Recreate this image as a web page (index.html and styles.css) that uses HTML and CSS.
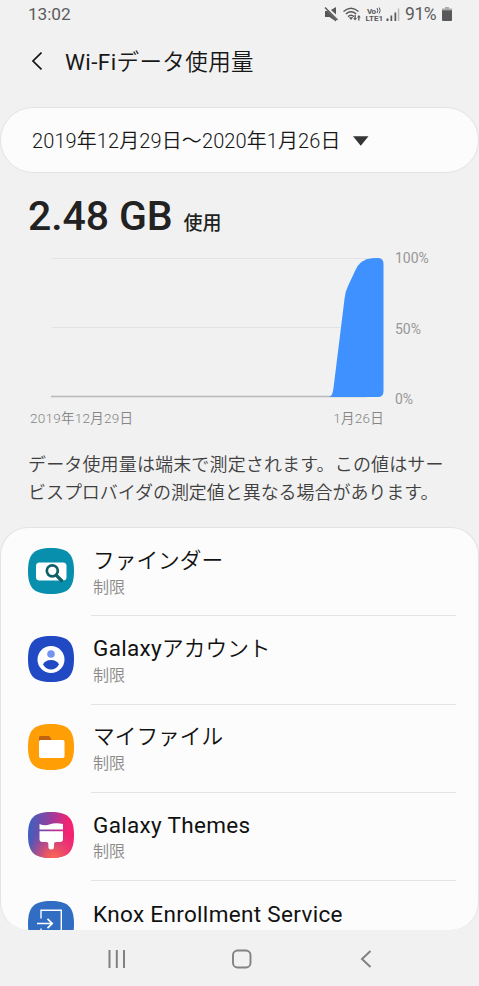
FILE: index.html
```html
<!DOCTYPE html>
<html lang="ja">
<head>
<meta charset="utf-8">
<title>Wi-Fiデータ使用量</title>
<link rel="stylesheet" href="styles.css">
</head>
<body>
<div class="screen">
  <div class="status">
    <span class="clock">13:02</span>
    <svg class="status-icons" width="78" height="20" viewBox="0 0 78 20">
      <path d="M1 7h2.500L12 15.500V17.500L5.500 13H1zM7 6l5-3v7.500z" fill="#58585a"/>
      <path d="M1 3.500L13.500 16" fill="none" stroke="#58585a" stroke-width="1.500"/>
      <path d="M24.800 13.200h4.400L27 16z" fill="#58585a"/>
      <path d="M30.500 11h1.300v3h1.200l-1.900 2.500-1.900-2.500h1.300zM34.200 16.500h1.300v-3h1.300L34.900 11 33 13.500h1.200z" fill="#58585a"/>
      <path d="M19.500 7.500Q27 .8 34.500 7.500M21.800 10Q27 5.500 32.200 10M24 12.600Q27 10 30 12.600" fill="none" stroke="#58585a" stroke-width="1.400"/>
      <g class="volte"><text x="43" y="9.500" textLength="9">Vo</text><text x="41.500" y="17.300" textLength="17.500" lengthAdjust="spacingAndGlyphs">LTE1</text></g>
      <path d="M53 4q1.600 2.500 0 5M55.200 3.500q2 3 0 6" fill="none" stroke="#58585a"/>
      <path d="M62.500 14.500h2V17h-2zM66.500 11.500h1.700V17h-1.700zM70.500 8.500h1.700V17h-1.700z" fill="#58585a"/>
      <path d="M73.800 4.500h1.500V17h-1.500z" fill="#bababa"/>
    </svg>
    <span class="percent">91%</span>
    <svg class="battery" width="10" height="15" viewBox="0 0 10 15"><path d="M3 0h4v2H3z" fill="#aaa"/><path d="M0 1.500h10v2H0z" fill="#aaa"/><path d="M0 3.200h10V13q0 1-1 1H1q-1 0-1-1z" fill="#58585a"/></svg>
  </div>
  <header class="header">
    <svg width="12" height="20" viewBox="0 0 12 20"><path d="M11.500 1.500L3 10l8.500 8.500" fill="none" stroke="#111" stroke-width="1.700"/></svg>
    <h1><span class="regular">Wi-Fi</span>データ使用量</h1>
  </header>
  <div class="period">
    <span>2019年12月29日～2020年1月26日</span>
    <svg width="16" height="10" viewBox="0 0 16 10"><path d="M0 .3h15.500L7.750 9.700z" fill="#353535"/></svg>
  </div>
  <div class="total"><b>2.48 GB</b><span>使用</span></div>
  <div class="chart">
    <svg width="336" height="142" viewBox="0 0 336 142">
      <path d="M4 2.500h330M4 71.500h330" stroke="#e2e2e2" fill="none"/>
      <path d="M3 140.500h316" stroke="#b9b9b9" stroke-width="1.400" fill="none"/>
      <path d="M281 141Q284.500 140.500 285.500 132L296.500 43Q297 36 300 30L307 15Q312 3 324 2.300L330 2Q335.500 2 335.500 8V135Q335.500 141 330 141z" fill="#3f91ff"/>
    </svg>
    <div class="scale"><span>100%</span><span>50%</span><span>0%</span></div>
  </div>
  <div class="dates"><span>2019年12月29日</span><span>1月26日</span></div>
  <p class="note">データ使用量は端末で測定されます。この値はサー<br><span class="line-end">ビスプロバイダの測定値と異なる場合があります。</span></p>
  <ul class="apps">
    <li class="app">
      <svg class="icon" viewBox="0 0 46 46"><path d="M23 0C40 0 46 6 46 23S40 46 23 46 0 40 0 23 6 0 23 0z" fill="#078fad"/><rect x="8" y="14.500" width="30.500" height="18" rx="3.500" fill="#fff"/><path d="M28 27l6.500 6.500" stroke="#10606c" stroke-width="3.200"/><circle cx="24.300" cy="22.800" r="5.500" fill="#fff" stroke="#10606c" stroke-width="2.700"/></svg>
      <div class="copy"><span class="name">ファインダー</span><span class="sub">制限</span></div>
    </li>
    <li class="app">
      <svg class="icon" viewBox="0 0 46 46"><path d="M23 0C40 0 46 6 46 23S40 46 23 46 0 40 0 23 6 0 23 0z" fill="#2049c3"/><circle cx="23" cy="23.500" r="13.500" fill="#fff"/><circle cx="23" cy="18" r="3.800" fill="#7594ef"/><path d="M15 28.500Q17 24 23 24t8 4.500Q28 33.500 23 33.500t-8-5z" fill="#2049c3"/></svg>
      <div class="copy"><span class="name"><span class="latin">Galaxy</span>アカウント</span><span class="sub">制限</span></div>
    </li>
    <li class="app">
      <svg class="icon" viewBox="0 0 46 46"><path d="M23 0C40 0 46 6 46 23S40 46 23 46 0 40 0 23 6 0 23 0z" fill="#ff9f05"/><path d="M11 18v-4.500q0-1.500 1.500-1.500h8q1 0 1.500 1l2 4z" fill="#bd6313"/><rect x="11" y="16" width="25.500" height="18" rx="1.700" fill="#fff"/></svg>
      <div class="copy"><span class="name">マイファイル</span><span class="sub">制限</span></div>
    </li>
    <li class="app">
      <svg class="icon" viewBox="0 0 46 46">
        <defs><linearGradient id="theme" x1="0" y1=".4" x2="1" y2=".5"><stop stop-color="#3b61bf"/><stop offset=".5" stop-color="#a13a9a"/><stop offset=".85" stop-color="#f32372"/></linearGradient><radialGradient id="warm" cx=".55" cy="1" r=".6"><stop stop-color="#ff6950"/><stop offset=".3" stop-color="#f45b5c" stop-opacity=".85"/><stop offset="1" stop-color="#d44a80" stop-opacity="0"/></radialGradient></defs>
        <path d="M23 0C40 0 46 6 46 23S40 46 23 46 0 40 0 23 6 0 23 0z" fill="url(#theme)"/><path d="M23 0C40 0 46 6 46 23S40 46 23 46 0 40 0 23 6 0 23 0z" fill="url(#warm)"/>
        <path d="M11.500 12Q17 14.200 22 12.300T35 12v5.500H11.500zM11.500 19.300H35V27q0 3-3 3h-4q-2 0-2 2v3q0 2.500-2.800 2.500T20.400 35v-3q0-2-2-2h-4q-2.900 0-2.900-3z" fill="#fff"/></svg>
      <div class="copy"><span class="name latin">Galaxy Themes</span><span class="sub">制限</span></div>
    </li>
    <li class="app">
      <svg class="icon" viewBox="0 0 46 46"><path d="M23 0C40 0 46 6 46 23S40 46 23 46 0 40 0 23 6 0 23 0z" fill="#316dc3"/><path d="M13 17.500V9.300h20.300v28H13V27.500" fill="none" stroke="#fff" stroke-width="1.400"/><path d="M9 22.500h15M19.500 17.800l4.700 4.700-4.700 4.700" fill="none" stroke="#fff" stroke-width="1.700"/></svg>
      <div class="copy"><span class="name latin">Knox Enrollment Service</span></div>
    </li>
  </ul>
  <nav class="nav">
    <svg width="18" height="18" viewBox="0 0 18 18"><path d="M1.500 0v18M8.800 0v18M16 0v18" stroke="#828282" stroke-width="2"/></svg>
    <svg width="20" height="20" viewBox="0 0 20 20"><rect x="1" y="1.500" width="17.500" height="17" rx="4.500" fill="none" stroke="#828282" stroke-width="1.900"/></svg>
    <svg width="12" height="18" viewBox="0 0 12 18"><path d="M10.500 1L2 9l8.500 8" fill="none" stroke="#828282" stroke-width="2"/></svg>
  </nav>
</div>
</body>
</html>
```
FILE: styles.css
```css
* { box-sizing: border-box; }
body { margin: 0; background: #f1f1f1; font-family: Roboto, "Noto Sans CJK JP DemiLight", "Noto Sans CJK JP", sans-serif; color: #171717; }
svg { display: block; flex: none; }
.screen { height: 986px; overflow: hidden; display: flex; flex-direction: column; }
.screen > * { flex: none; }
.status { height: 28px; display: flex; align-items: center; padding: 0 26px 0 28px; color: #5c5c5e; font-size: 17.3px; font-weight: 400; }
.clock { width: 296px; letter-spacing: -.1px; }
.percent { width: 36px; margin-left: 3px; font-size: 17.5px; letter-spacing: -.4px; }
.battery { margin-left: 1px; }
.volte { font: 700 8px Roboto, sans-serif; fill: #58585a; }
.header { height: 79px; display: flex; align-items: center; padding: 0 30px 13px; gap: 23px; }
h1 { margin: 0; padding-top: 2px; font-size: 22.5px; font-weight: 350; letter-spacing: .4px; line-height: 34px; white-space: nowrap; }
.regular { font-weight: 400; }
.period { height: 66px; border: 1px solid #e3e3e3; border-radius: 33px; background: #fcfcfc; display: flex; align-items: center; padding: 0 0 1px 31px; gap: 12px; font-size: 20px; font-weight: 350; letter-spacing: .1px; white-space: nowrap; }
.period svg { margin-top: 2px; }
.total { height: 79px; display: flex; align-items: baseline; padding: 18px 28px 0; line-height: 50px; gap: 11px; color: #222; }
.total b { font-size: 41px; font-weight: 500; letter-spacing: -.1px; white-space: nowrap; }
.total span { font-family: "Noto Sans CJK JP", sans-serif; font-size: 19px; font-weight: 500; }
.chart { height: 154px; display: flex; padding: 4px 0 0 48px; gap: 11px; }
.scale { height: 157px; margin-top: -6px; display: flex; flex-direction: column; justify-content: space-between; font-size: 14px; line-height: 16px; font-weight: 400; color: #979797; }
.dates { height: 24px; width: 384px; padding-left: 30px; display: flex; justify-content: space-between; font-size: 13.5px; font-weight: 350; letter-spacing: .25px; line-height: 24px; color: #858585; }
.note { height: 97px; margin: 0; padding: 21px 28px 0; font-size: 18px; line-height: 27.500px; font-weight: 350; letter-spacing: .15px; white-space: nowrap; color: #404040; }
.line-end { letter-spacing: -.05px; }
.apps { list-style: none; height: 403px; margin: 0; padding: 0; overflow: hidden; background: #fcfcfc; border: 1px solid #e3e3e3; border-width: 1px 1px 0; border-radius: 28px; }
.app { height: 88.300px; display: flex; padding-left: 27px; gap: 17px; }
.icon { width: 46px; height: 46px; margin-top: 19.500px; }
.copy { width: 365px; display: flex; flex-direction: column; padding: 17.500px 0 0 2px; border-bottom: 1.500px solid #e3e3e3; }
.name { font-size: 21.7px; line-height: 30px; font-weight: 350; white-space: nowrap; color: #111; }
.latin { font-size: 22.500px; line-height: 29px; letter-spacing: .33px; font-weight: 400; }
.name.latin { line-height: 30px; }
.sub { font-size: 16px; line-height: 24px; font-weight: 350; color: #8a8a8a; }
.nav { height: 56px; padding: 2px 107px 0 108px; display: flex; align-items: center; justify-content: space-between; }
.nav svg:nth-child(2) { margin-right: 3px; }
```
